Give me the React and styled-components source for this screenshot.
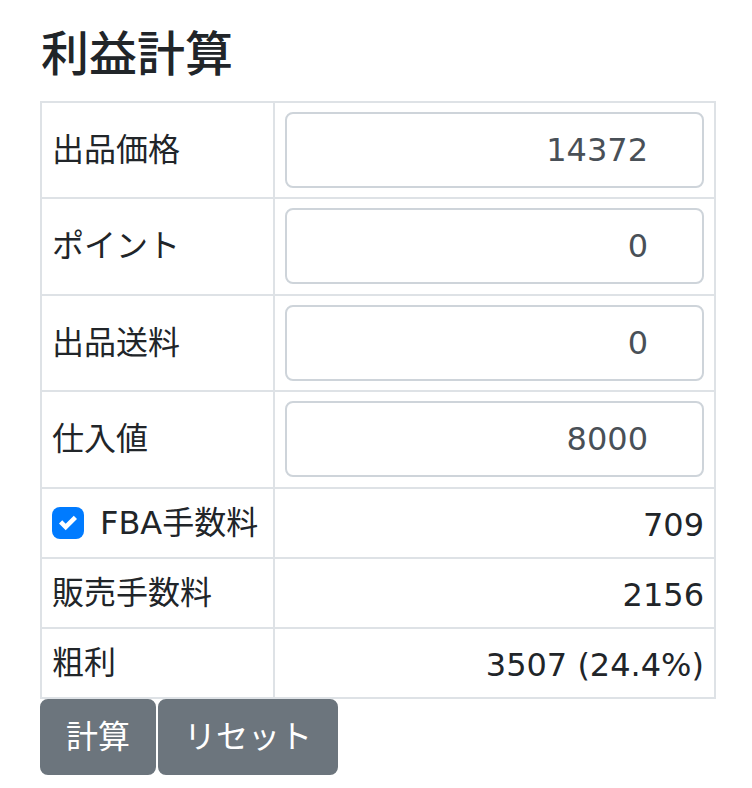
import React from 'react';
import styled, {createGlobalStyle} from 'styled-components';

const GlobalStyle = createGlobalStyle`
    body {
        margin: 0;
        font-family: "DejaVu Sans", "Noto Sans CJK JP", sans-serif;
        color: #212529;
        background: #fff;
    }
`;

const Page = styled.div`
    padding: 26px 36px 0 40px;
`;

const Title = styled.h4`
    font-size: 48px;
    font-weight: 500;
    line-height: 1.2;
    margin: 0 0 17px 0;
    padding-left: 1px;
`;

const Table = styled.table`
    width: 676px;
    border-collapse: collapse;
    font-size: 32px;
    line-height: 1.5;
`;

const Cell = styled.td`
    border: 2px solid #dee2e6;
    padding: ${props => props.$field ? '9.25px 10px' : props.$right ? '12px 10px 8px' : '10px'};
    vertical-align: middle;
    width: ${props => props.$label ? '211px' : 'auto'};
    text-align: ${props => props.$right ? 'right' : 'left'};
    white-space: nowrap;
`;

const Input = styled.input`
    display: block;
    box-sizing: border-box;
    width: 100%;
    height: 76px;
    padding: 12px 54px 12px 24px;
    font: inherit;
    font-size: 32px;
    color: #495057;
    text-align: right;
    border: 2px solid #ced4da;
    border-radius: 8px;
    background: #fff;
    outline: none;
`;

const CheckLabel = styled.label`
    display: flex;
    align-items: center;
    gap: 16px;
`;

const Box = styled.span`
    width: 32px;
    height: 32px;
    border-radius: 8px;
    background: #007bff;
    display: flex;
    align-items: center;
    justify-content: center;
`;

const Buttons = styled.div`
    display: flex;
    gap: 2px;
`;

const Button = styled.button`
    font: inherit;
    font-size: 32px;
    line-height: 1.5;
    color: #fff;
    background: #6c757d;
    border: 2px solid #6c757d;
    border-radius: 8px;
    padding: 12px 24px;
`;

const inputs = [
    ['出品価格', '14372'],
    ['ポイント', '0'],
    ['出品送料', '0'],
    ['仕入値', '8000'],
];

export default function App() {
    return (
        <Page>
            <GlobalStyle />
            <Title>利益計算</Title>
            <Table>
                <tbody>
                    {inputs.map(([label, value]) => (
                        <tr key={label}>
                            <Cell $label $field>{label}</Cell>
                            <Cell $field><Input defaultValue={value} /></Cell>
                        </tr>
                    ))}
                    <tr>
                        <Cell $label>
                            <CheckLabel>
                                <Box>
                                    <svg width="18" height="18" viewBox="0 0 8 8">
                                        <path fill="#fff" d="M6.564.75l-3.59 3.612-1.538-1.55L0 4.26l2.974 2.99L8 2.193z" />
                                    </svg>
                                </Box>
                                FBA手数料
                            </CheckLabel>
                        </Cell>
                        <Cell $right>709</Cell>
                    </tr>
                    <tr>
                        <Cell $label>販売手数料</Cell>
                        <Cell $right>2156</Cell>
                    </tr>
                    <tr>
                        <Cell $label>粗利</Cell>
                        <Cell $right>3507 (24.4%)</Cell>
                    </tr>
                </tbody>
            </Table>
            <Buttons>
                <Button>計算</Button>
                <Button>リセット</Button>
            </Buttons>
        </Page>
    );
}
